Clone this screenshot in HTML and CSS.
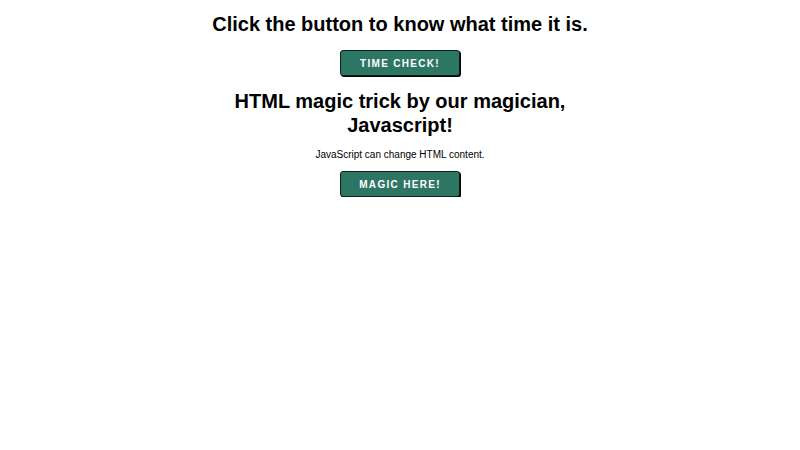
FILE: index.html
```html
<!DOCTYPE html>
<html>
<head>
<meta charset="utf-8">
<link rel="stylesheet" href="styles.css">
</head>
<body>
<main class="page">
  <h1 class="title">Click the button to know what time it is.</h1>
  <button class="btn">TIME CHECK!</button>
  <h2 class="title two">HTML magic trick by our magician, Javascript!</h2>
  <p class="note">JavaScript can change HTML content.</p>
  <button class="btn">MAGIC HERE!</button>
</main>
</body>
</html>
```
FILE: styles.css
```css
html, body { margin: 0; padding: 0; background: #fff; }
body { font-family: "Liberation Sans", Arial, sans-serif; color: #000; }
.page {
  width: 400px;
  margin: 0 auto;
  display: flex;
  flex-direction: column;
  align-items: center;
  text-align: center;
  padding-top: 12px;
}
.title {
  font-size: 20px;
  font-weight: bold;
  line-height: 24px;
  margin: 0;
}
.two { margin-top: 13px; }
.btn {
  margin-top: 14px;
  width: 120px;
  height: 26px;
  background: #2e7664;
  color: #fff;
  border: 1px solid #0e1f1a;
  border-radius: 3px;
  box-shadow: 1px 1px 0 #000;
  font-family: "Liberation Sans", Arial, sans-serif;
  font-weight: bold;
  font-size: 10px;
  letter-spacing: 1.3px;
  padding: 0;
}
.note { font-size: 10px; margin: 12px 0 0; line-height: 12px; }
.note + .btn { margin-top: 10px; }
```
